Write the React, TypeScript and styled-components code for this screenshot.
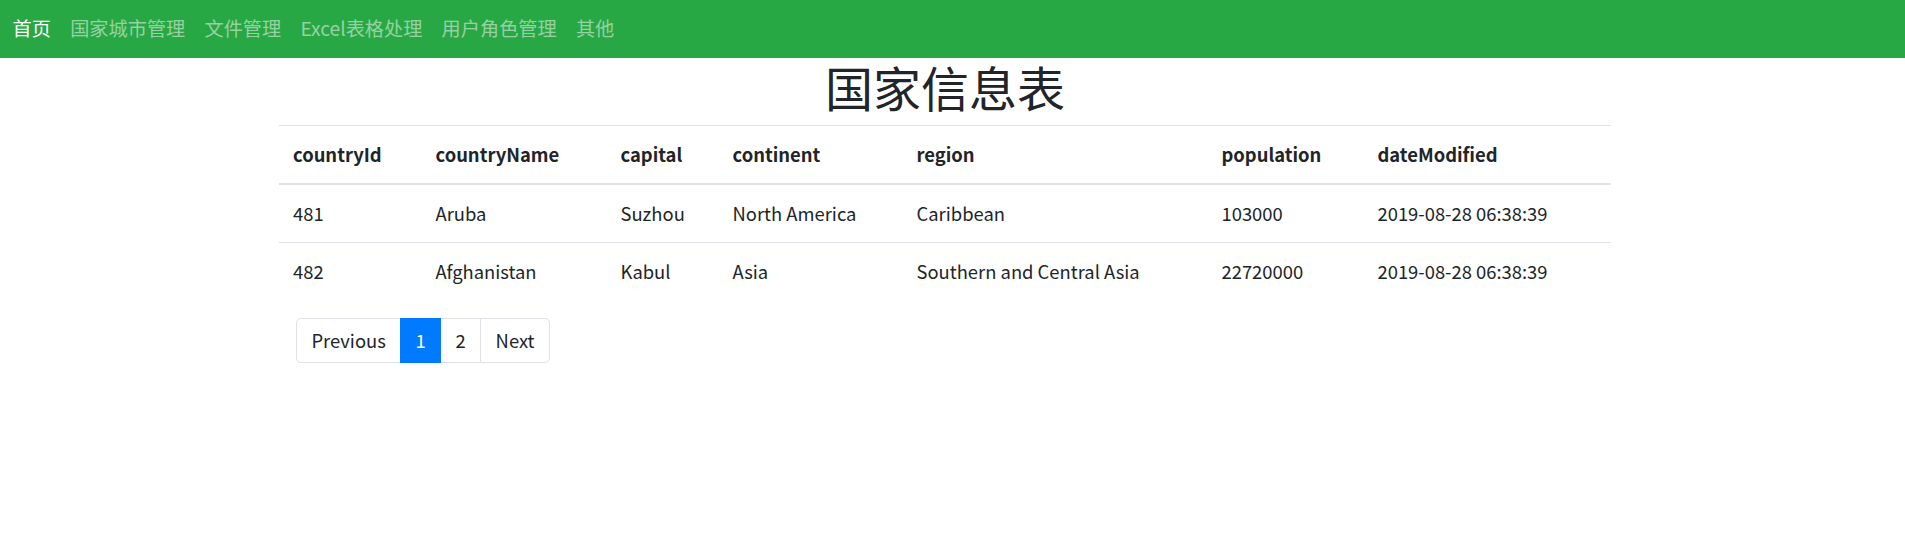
import React from "react";
import styled, { createGlobalStyle } from "styled-components";

const Global = createGlobalStyle`
  html, body { margin: 0; padding: 0; background: #fff; }
  body {
    font-family: "Noto Sans CJK SC", "Noto Sans", sans-serif;
    font-size: 18.4px;
    line-height: 1.5;
    color: #212529;
  }
  * { box-sizing: border-box; }
`;

const Navbar = styled.nav`
  height: 58px;
  background: #28a745;
  display: flex;
  align-items: center;
  padding: 0 0 2px 3px;
`;

const NavLink = styled.a<{ $active?: boolean }>`
  padding: 0 9.6px;
  font-size: 19.2px;
  line-height: 28.8px;
  color: ${(p) => (p.$active ? "#ffffff" : "rgba(255,255,255,0.5)")};
  text-decoration: none;
  cursor: pointer;
`;

const Container = styled.main`
  width: 1332px;
  margin-left: 279px;
`;

const Title = styled.h1`
  margin: 0 0 9.6px;
  font-size: 48px;
  font-weight: 400;
  line-height: 1.2;
  text-align: center;
  color: #212529;
`;

const Table = styled.table`
  width: 100%;
  table-layout: fixed;
  border-collapse: collapse;
  margin-bottom: 18px;
`;

const Th = styled.th`
  text-align: left;
  font-weight: 700;
  padding: 14px 13px 14px 14px;
  line-height: 28.8px;
  border-top: 1px solid #dee2e6;
  border-bottom: 2px solid #dee2e6;
  vertical-align: bottom;
  white-space: nowrap;
`;

const Td = styled.td`
  padding: 14px 13px 14px 14px;
  line-height: 28.8px;
  border-top: 1px solid #dee2e6;
  white-space: nowrap;
`;

const Pagination = styled.ul`
  display: flex;
  list-style: none;
  margin: 0 0 0 17px;
  padding: 0;
`;

const PageLink = styled.li<{ $active?: boolean; $first?: boolean; $last?: boolean }>`
  padding: 9.6px 14.4px;
  line-height: 24px;
  border: 1px solid ${(p) => (p.$active ? "#007bff" : "#dee2e6")};
  margin-left: ${(p) => (p.$first ? "0" : "-1px")};
  background: ${(p) => (p.$active ? "#007bff" : "#fff")};
  color: ${(p) => (p.$active ? "#fff" : "#212529")};
  border-radius: ${(p) =>
    p.$first ? "4.8px 0 0 4.8px" : p.$last ? "0 4.8px 4.8px 0" : "0"};
  position: relative;
  z-index: ${(p) => (p.$active ? 1 : 0)};
  cursor: pointer;
`;

const columns = [
  { key: "countryId", w: 142.5 },
  { key: "countryName", w: 185 },
  { key: "capital", w: 112 },
  { key: "continent", w: 184 },
  { key: "region", w: 305 },
  { key: "population", w: 156 },
  { key: "dateModified", w: 247.5 },
];

const rows = [
  ["481", "Aruba", "Suzhou", "North America", "Caribbean", "103000", "2019-08-28 06:38:39"],
  ["482", "Afghanistan", "Kabul", "Asia", "Southern and Central Asia", "22720000", "2019-08-28 06:38:39"],
];

const navItems = ["国家城市管理", "文件管理", "Excel表格处理", "用户角色管理", "其他"];

export default function App() {
  return (
    <>
      <Global />
      <Navbar>
        <NavLink $active>首页</NavLink>
        {navItems.map((n) => (
          <NavLink key={n}>{n}</NavLink>
        ))}
      </Navbar>
      <Container>
        <Title>国家信息表</Title>
        <Table>
          <colgroup>
            {columns.map((c) => (
              <col key={c.key} style={{ width: c.w }} />
            ))}
          </colgroup>
          <thead>
            <tr>
              {columns.map((c) => (
                <Th key={c.key}>{c.key}</Th>
              ))}
            </tr>
          </thead>
          <tbody>
            {rows.map((r) => (
              <tr key={r[0]}>
                {r.map((v, i) => (
                  <Td key={i}>{v}</Td>
                ))}
              </tr>
            ))}
          </tbody>
        </Table>
        <Pagination>
          <PageLink $first>Previous</PageLink>
          <PageLink $active>1</PageLink>
          <PageLink>2</PageLink>
          <PageLink $last>Next</PageLink>
        </Pagination>
      </Container>
    </>
  );
}
